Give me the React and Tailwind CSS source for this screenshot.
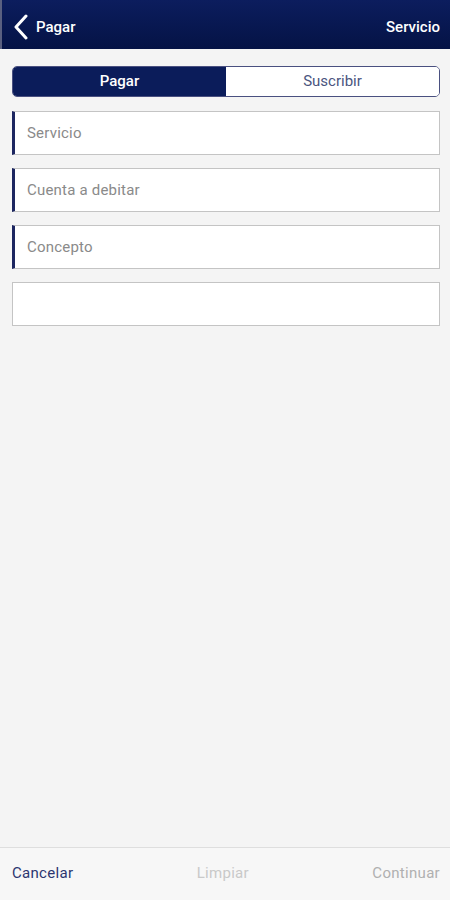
import React from "react";

export default function App() {
  const font = { fontFamily: "Roboto, 'Liberation Sans', sans-serif" };
  return (
    <div className="w-[450px] h-[900px] flex flex-col bg-[#f4f4f4]" style={font}>
      <div className="h-[49px] flex items-center justify-between pl-[11px] pr-[10px] pt-[5px] bg-gradient-to-b from-[#0c1d5e] to-[#051345] border-l-2 border-[#5a6080]">
        <div className="flex items-center gap-[7px]">
          <svg width="16" height="26" viewBox="0 0 16 26" fill="none">
            <path d="M13 2 L3 13 L13 24" stroke="white" strokeWidth="3" strokeLinecap="round" strokeLinejoin="round" />
          </svg>
          <span className="text-white text-[15px] font-medium">Pagar</span>
        </div>
        <span className="text-white text-[15px] font-medium">Servicio</span>
      </div>

      <div className="flex-1 flex flex-col pl-[12px] pr-[10px] pt-[17px]">
        <div className="flex h-[31px] rounded-[5px] border-[1.5px] border-[#4a5080] overflow-hidden">
          <div className="flex-1 flex items-center justify-center bg-[#0b1c5a] text-white text-[15px] font-medium">Pagar</div>
          <div className="flex-1 flex items-center justify-center bg-white text-[#4a5580] text-[15px]">Suscribir</div>
        </div>

        <div className="flex flex-col gap-[13px] mt-[14px]">
          {["Servicio", "Cuenta a debitar", "Concepto"].map((t) => (
            <div key={t} className="h-[44px] flex items-center bg-white border border-[#c4c4c4] border-l-[3px] border-l-[#1c2660] pl-[12px] text-[15px] text-[#8a8a8a] tracking-[0.2px]">
              {t}
            </div>
          ))}
          <div className="h-[44px] bg-white border border-[#c4c4c4]"></div>
        </div>
      </div>

      <div className="h-[53px] border-t border-[#dedede] bg-[#f7f7f7] flex items-center justify-between pl-[12px] pr-[10px] pb-[1px]">
        <span className="text-[15px] text-[#2c3670] tracking-[0.3px]">Cancelar</span>
        <span className="text-[15px] text-[#c9c9c9] tracking-[0.3px]">Limpiar</span>
        <span className="text-[15px] text-[#b0b0b0] tracking-[0.3px]">Continuar</span>
      </div>
    </div>
  );
}
